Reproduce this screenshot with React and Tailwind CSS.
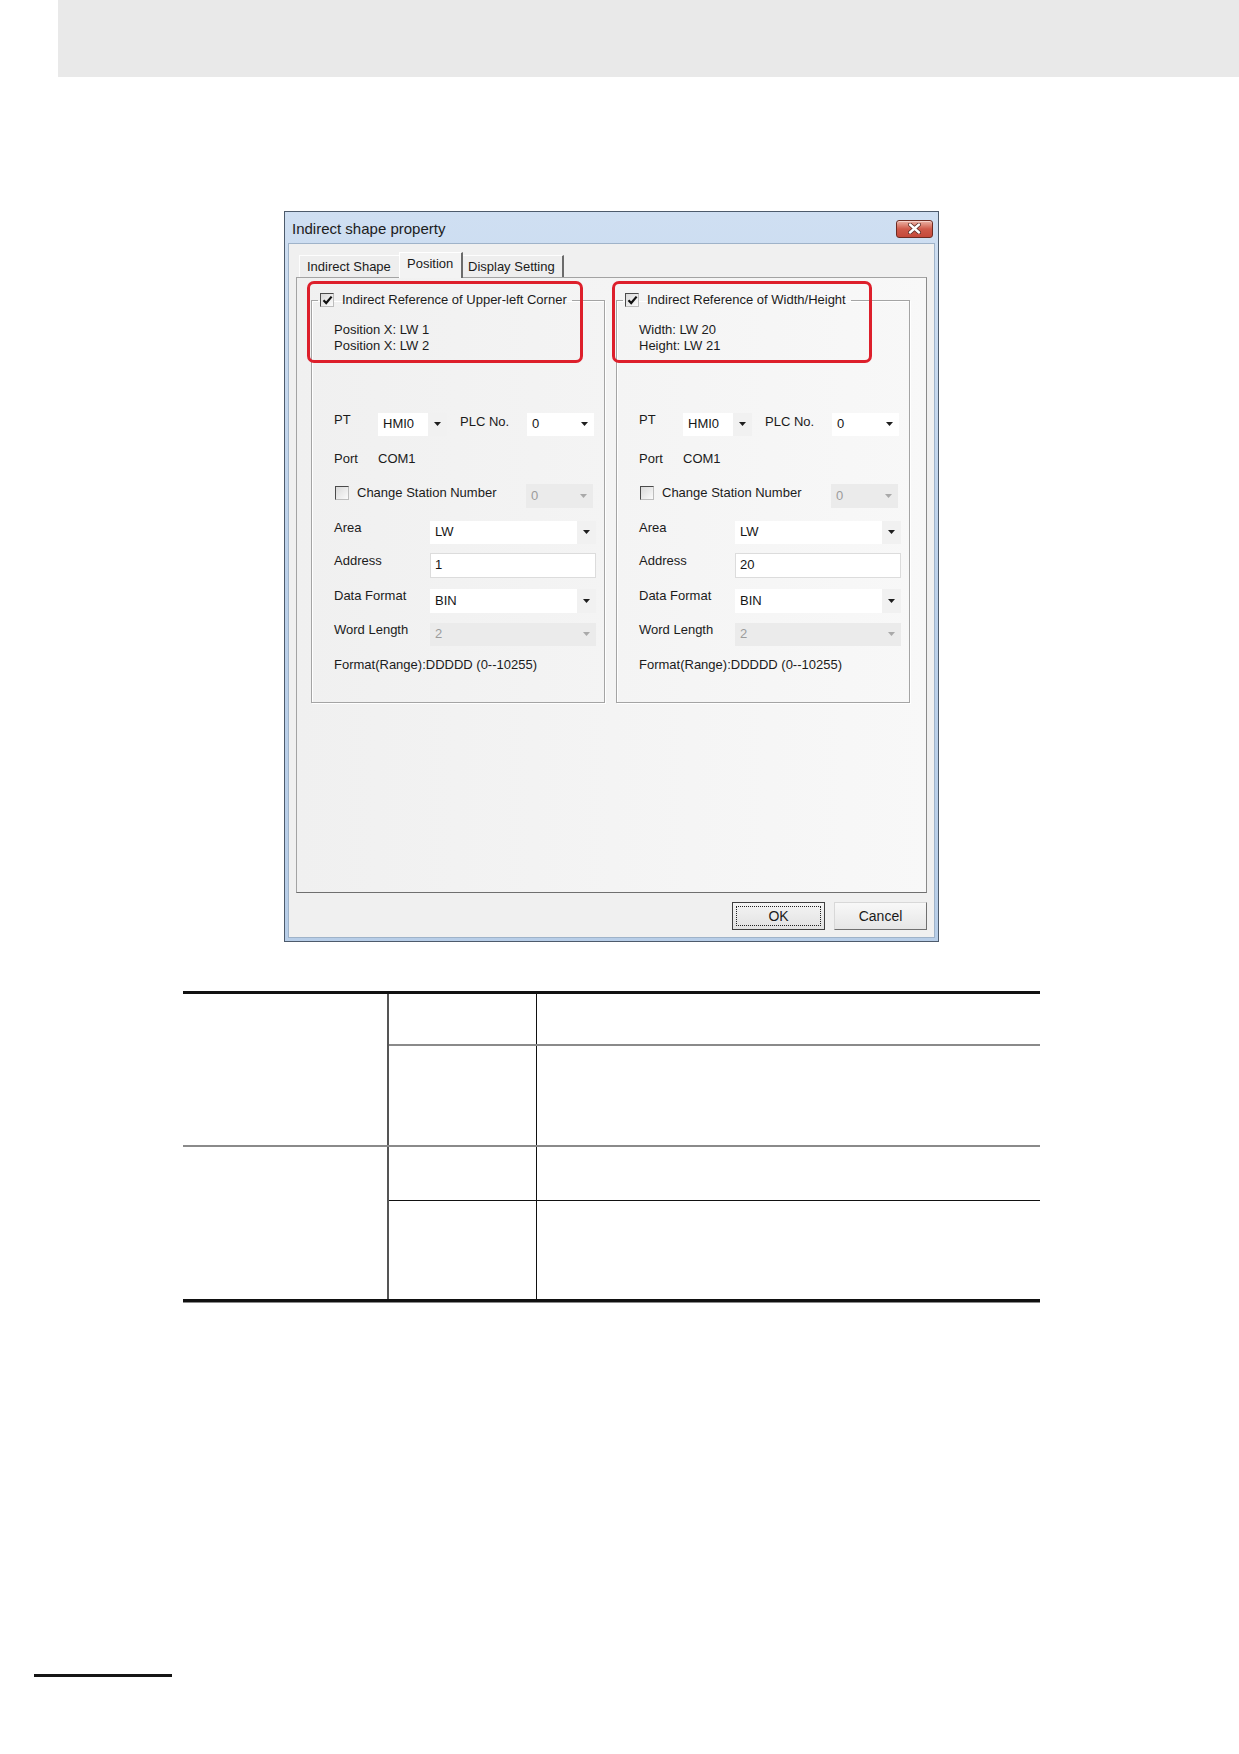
import React from "react";

const FONT = "font-['Liberation_Sans',Arial,sans-serif]";

function Arrow({ disabled }) {
  return (
    <svg width="7" height="4" viewBox="0 0 7 4" className="shrink-0">
      <path d="M0 0h7L3.5 4z" fill={disabled ? "#a9a9a9" : "#1e1e1e"} />
    </svg>
  );
}

function Check({ checked }) {
  return (
    <span className="flex h-[14px] w-[14px] shrink-0 items-center justify-center border border-[#4a4a4a] border-b-[#bdbdbd] border-r-[#bdbdbd] bg-gradient-to-br from-[#d9d9d9] to-[#fbfbfb]">
      {checked && (
        <svg width="11" height="10" viewBox="0 0 11 10">
          <path d="M1.5 5.2 L4.2 8 L9.6 1.6" fill="none" stroke="#111" strokeWidth="2.2" />
        </svg>
      )}
    </span>
  );
}

function Combo({ value, className, disabled, arrowBox }) {
  return (
    <div
      className={`flex h-full items-center ${
        disabled ? "bg-[#ebebeb] text-[#9c9c9c]" : "bg-white text-[#151515]"
      } ${className}`}
    >
      <span className="flex-1 pl-[5px]">{value}</span>
      <span
        className={`flex h-full w-[19px] items-center justify-center ${
          arrowBox ? "bg-[#f1f1f1]" : ""
        }`}
      >
        <Arrow disabled={disabled} />
      </span>
    </div>
  );
}

function Group({ title, lines, address }) {
  return (
    <fieldset className="h-[412px] w-[294px] border border-[#a4a4a4] shadow-[inset_1px_1px_0_#ffffff,1px_1px_0_#ffffff]">
      <legend className="ml-[6px] px-[2px] pr-[5px]">
        <span className="inline-flex h-[16px] items-center gap-[8px]">
          <Check checked />
          <span>{title}</span>
        </span>
      </legend>

      <div className="pl-[22px] pt-[11px]">
        <div className="flex h-[16px] items-center">{lines[0]}</div>
        <div className="flex h-[16px] items-center">{lines[1]}</div>

        {/* PT / PLC No. */}
        <div className="mt-[59px] flex h-[23px] items-center">
          <span className="w-[44px] pb-[8px]">PT</span>
          <Combo value="HMI0" className="w-[69px]" arrowBox />
          <span className="ml-[13px] w-[67px] pb-[4px]">PLC No.</span>
          <Combo value="0" className="w-[67px]" />
        </div>

        {/* Port */}
        <div className="mt-[11px] flex h-[24px] items-center">
          <span className="w-[44px]">Port</span>
          <span>COM1</span>
        </div>

        {/* Change Station Number */}
        <div className="mt-[13px] flex h-[24px] items-center">
          <span className="flex w-[192px] items-center gap-[8px] pb-[6px] pl-[1px]">
            <Check />
            <span>Change Station Number</span>
          </span>
          <Combo value="0" className="w-[67px]" disabled />
        </div>

        {/* Area */}
        <div className="mt-[13px] flex h-[23px] items-center">
          <span className="w-[96px] pb-[9px]">Area</span>
          <Combo value="LW" className="w-[166px]" arrowBox />
        </div>

        {/* Address */}
        <div className="mt-[9px] flex h-[25px] items-center">
          <span className="w-[96px] pb-[9px]">Address</span>
          <div className="flex h-full w-[166px] items-center border border-[#dcdcdc] bg-white pl-[4px] text-[#151515]">
            {address}
          </div>
        </div>

        {/* Data Format */}
        <div className="mt-[11px] flex h-[24px] items-center">
          <span className="w-[96px] pb-[9px]">Data Format</span>
          <Combo value="BIN" className="w-[166px]" arrowBox />
        </div>

        {/* Word Length */}
        <div className="mt-[10px] flex h-[23px] items-center">
          <span className="w-[96px] pb-[9px]">Word Length</span>
          <Combo value="2" className="w-[166px]" disabled />
        </div>

        <div className="mt-[11px] flex h-[16px] items-center">
          Format(Range):DDDDD (0--10255)
        </div>
      </div>
    </fieldset>
  );
}

function Dialog() {
  return (
    <div className="ml-[284px] flex h-[731px] w-[655px] flex-col border border-[#4d5b6c] bg-gradient-to-b from-[#cfdff2] via-[#bcd1ea] to-[#b8cee8] px-[3px] pb-[3px]">
      {/* title bar */}
      <div className="flex h-[31px] items-center justify-between">
        <span className="pl-[4px] pt-[3px] text-[15px] text-[#1c1c1c]">
          Indirect shape property
        </span>
        <div className="mr-[2px] mt-[2px] flex h-[18px] w-[37px] items-center justify-center rounded-[3px] border border-[#6e2b22] bg-gradient-to-b from-[#eab1a5] via-[#cf5a4a] to-[#c5493a] shadow-[inset_0_1px_0_#f6d0c8]">
          <svg width="13" height="11" viewBox="0 0 13 11">
            <path d="M2 1.5 L11 9.5 M11 1.5 L2 9.5" stroke="#5a2a24" strokeWidth="4" strokeLinecap="round" />
            <path d="M2 1.5 L11 9.5 M11 1.5 L2 9.5" stroke="#ffffff" strokeWidth="2.4" strokeLinecap="round" />
          </svg>
        </div>
      </div>

      {/* client area */}
      <div className="flex flex-1 flex-col border border-[#9fb3c9] bg-[#f0f0f0] px-[7px] pb-[7px] pt-[8px] text-[13px] text-[#1b1b1b]">
        {/* tabs */}
        <div className="ml-[3px] flex h-[25px] items-end">
          <div className="flex h-[22px] w-[100px] items-center border-l border-t border-[#fdfdfd] bg-[#eeeeee] pl-[7px]">
            Indirect Shape
          </div>
          <div className="relative z-10 -mb-px flex h-[26px] w-[64px] items-center border-l border-t border-r-2 border-[#ffffff] border-r-[#6b6b6b] bg-[#f3f3f3] pb-[3px] pl-[7px]">
            Position
          </div>
          <div className="flex h-[22px] w-[101px] items-center border-t border-r-2 border-[#fdfdfd] border-r-[#6b6b6b] bg-[#eeeeee] pl-[5px]">
            Display Setting
          </div>
        </div>

        {/* tab panel */}
        <div className="relative flex flex-1 gap-[11px] border border-[#a3a3a3] border-b-[#6f6f6f] border-r-[#8a8a8a] bg-gradient-to-r from-[#f0f0f0] to-[#f8f8f8] pl-[14px] pt-[13px]">
          <Group
            title="Indirect Reference of Upper-left Corner"
            lines={["Position X: LW 1", "Position X: LW 2"]}
            address="1"
          />
          <Group
            title="Indirect Reference of Width/Height"
            lines={["Width: LW 20", "Height: LW 21"]}
            address="20"
          />

          {/* highlight frames */}
          <div className="pointer-events-none absolute left-[10px] top-[3px] h-[82px] w-[276px] rounded-[7px] border-[3px] border-[#dd1f2b]" />
          <div className="pointer-events-none absolute left-[315px] top-[3px] h-[82px] w-[260px] rounded-[7px] border-[3px] border-[#dd1f2b]" />
        </div>

        {/* buttons */}
        <div className="mt-[9px] flex justify-end gap-[9px] text-[14px]">
          <div className="flex h-[28px] w-[93px] items-center justify-center border border-[#3f3f3f] bg-gradient-to-b from-[#f4f4f4] to-[#e2e2e2] p-[3px]">
            <div className="flex h-full w-full items-center justify-center border border-dotted border-[#222]">
              OK
            </div>
          </div>
          <div className="flex h-[28px] w-[93px] items-center justify-center border border-[#d8d8d8] border-b-[#707070] border-r-[#707070] bg-gradient-to-b from-[#f8f8f8] to-[#e6e6e6]">
            Cancel
          </div>
        </div>
      </div>
    </div>
  );
}

function SpecTable() {
  return (
    <div className="ml-[183px] mt-[49px] w-[857px] border-t-[3px] border-[#111]">
      <div className="flex border-b-2 border-[#8a8a8a]">
        <div className="w-[206px] border-r-2 border-[#555]" />
        <div className="flex flex-1 flex-col">
          <div className="flex h-[52px] border-b-2 border-[#8a8a8a]">
            <div className="w-[148px] border-r border-[#111]" />
            <div className="flex-1" />
          </div>
          <div className="flex h-[99px]">
            <div className="w-[148px] border-r border-[#111]" />
            <div className="flex-1" />
          </div>
        </div>
      </div>
      <div className="flex border-b-[3px] border-[#111] shadow-[0_1px_0_#8a8a8a]">
        <div className="w-[206px] border-r-2 border-[#555]" />
        <div className="flex flex-1 flex-col">
          <div className="flex h-[54px] border-b border-[#111]">
            <div className="w-[148px] border-r border-[#111]" />
            <div className="flex-1" />
          </div>
          <div className="flex h-[98px]">
            <div className="w-[148px] border-r border-[#111]" />
            <div className="flex-1" />
          </div>
        </div>
      </div>
    </div>
  );
}

export default function App() {
  return (
    <div className={`${FONT} w-[1239px] bg-white pb-[78px]`}>
      <div className="ml-[58px] h-[77px] bg-[#e9e9e9]" />
      <div className="mt-[134px]">
        <Dialog />
      </div>
      <SpecTable />
      <div className="ml-[34px] mt-[372px] h-[3px] w-[138px] bg-[#151515]" />
    </div>
  );
}
